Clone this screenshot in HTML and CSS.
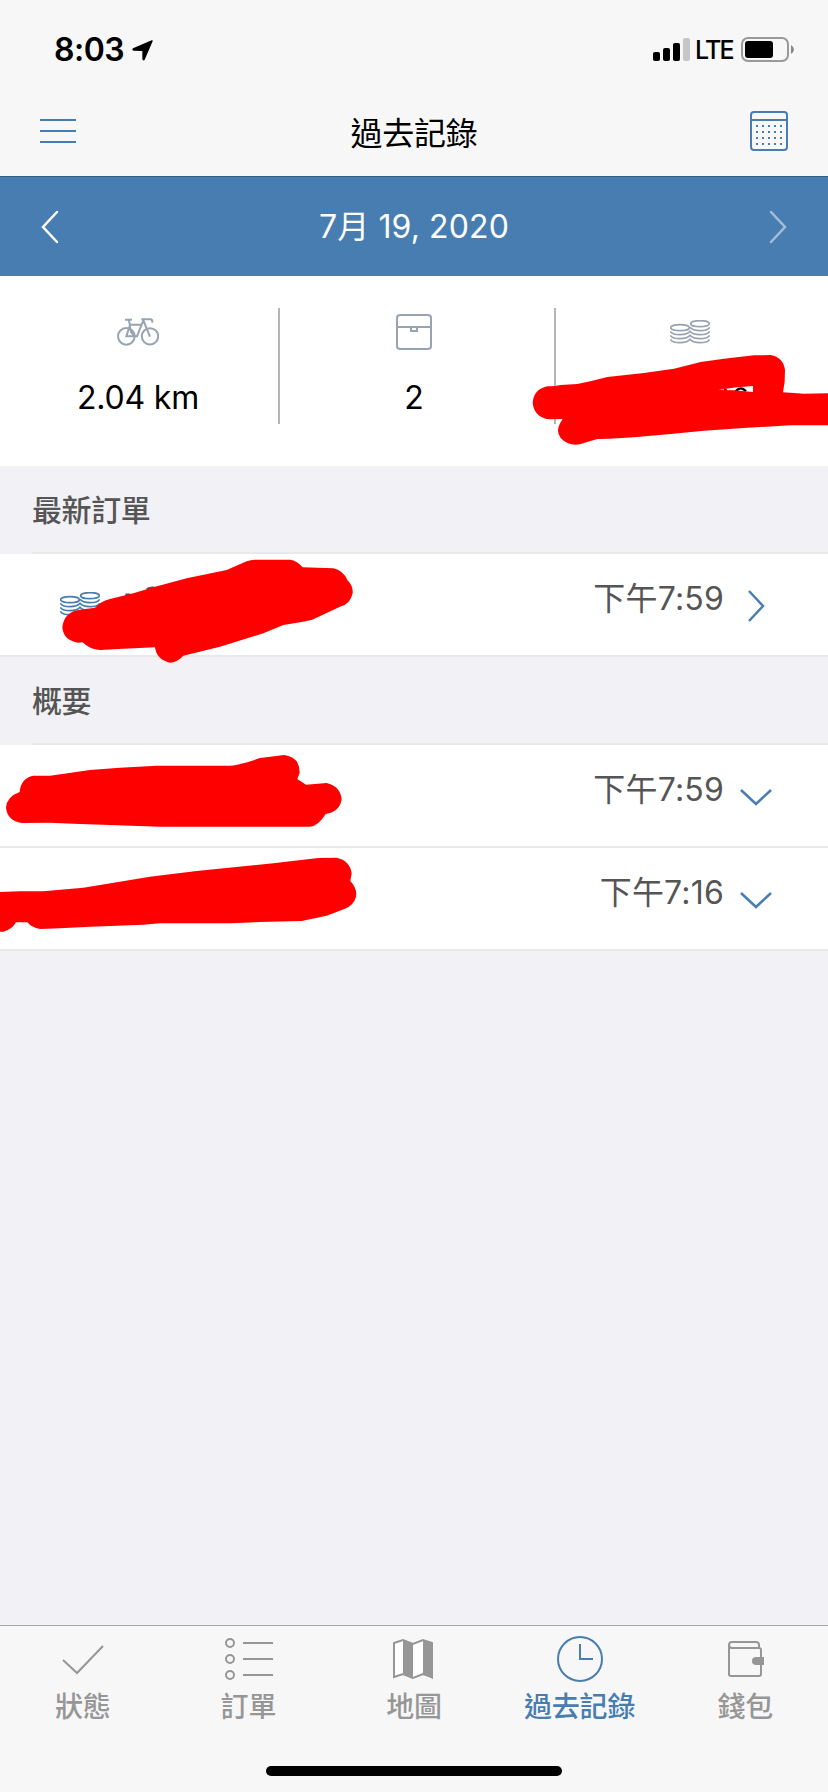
FILE: index.html
```html
<!DOCTYPE html>
<html lang="zh-Hant">
<head>
<meta charset="utf-8">
<title>過去記錄</title>
<link rel="stylesheet" href="styles.css">
</head>
<body>
<div class="screen">
  <header class="status-bar">
    <span class="clock">8:03</span>
    <svg class="location" width="21" height="21" viewBox="0 0 63 63"><path d="M59 1 Q63 0 62 4 L38 59 Q34 64 31 58 L31 33 L5 32 Q-2 30 3 25 Z"/></svg>
    <div class="status-right">
      <svg width="37" height="23" viewBox="0 0 37 23"><rect x="0" y="14" width="7" height="9" rx="2"/><rect x="10" y="10" width="7" height="13" rx="2"/><rect x="20" y="5" width="7" height="18" rx="2"/><rect x="30" y="0" width="7" height="23" rx="2" fill="#c6c6c6"/></svg>
      <span class="network">LTE</span>
      <svg class="battery" width="54" height="25" viewBox="0 0 54 25"><rect x="2" y="1" width="46" height="23" rx="6" fill="none" stroke="#999" stroke-width="2"/><rect x="5" y="4" width="28" height="17" rx="3"/><path d="M51 8 Q54 10 54 12.500 Q54 15 51 17 Z" fill="#888"/></svg>
    </div>
  </header>
  <nav class="nav-bar">
    <svg class="menu" width="36" height="24" viewBox="0 0 36 24"><path d="M0 1H36M0 12H36M0 23H36"/></svg>
    <h1 class="title">過去記錄</h1>
    <svg class="calendar" width="38" height="40" viewBox="0 0 38 40"><rect x="1" y="1" width="36" height="38" rx="3"/><path d="M1 9H37"/><path stroke-dasharray="2 4" d="M6 15H33M6 21H33M6 27H33M6 33H33"/></svg>
  </nav>
  <div class="date-bar">
    <svg width="18" height="34" viewBox="0 0 18 34"><path d="M16 2L2 17L16 32"/></svg>
    <span class="date">7月 19, 2020</span>
    <svg class="disabled" width="18" height="34" viewBox="0 0 18 34"><path d="M2 2L16 17L2 32"/></svg>
  </div>
  <section class="stats">
    <div class="stat">
      <div class="stat-icon"><svg width="42" height="28" viewBox="351 142 126 84"><g stroke-width="6"><circle cx="379" cy="197" r="25"/><circle cx="450" cy="197" r="24.500"/><path d="M375 147H396M386 147L390 163L379 197H411L430 149M390 162H424M389 165L393 184L404 197M424 146H452Q458 147 457 156M430 149L450 198"/></g></svg></div>
      <div class="stat-value">2.04 km</div>
    </div>
    <div class="stat">
      <div class="stat-icon"><svg width="36" height="36" viewBox="0 0 36 36"><g stroke-width="2"><rect x="1" y="1" width="34" height="34" rx="3"/><path d="M1 13H35M15 13V17H21V13"/></g></svg></div>
      <div class="stat-value">2</div>
    </div>
    <div class="stat">
      <div class="stat-icon coins-icon"><svg width="40" height="24" viewBox="0 0 120 72"><use href="#coins"/></svg></div>
    </div>
  </section>
  <h2 class="section-title">最新訂單</h2>
  <div class="row">
    <svg class="row-coins" width="40" height="24" viewBox="0 0 120 72"><use href="#coins"/></svg>
    <span class="time">下午7:59</span>
    <svg class="chevron" width="32" height="32" viewBox="0 0 32 32"><path d="M9 1L23 16L9 31"/></svg>
  </div>
  <h2 class="section-title">概要</h2>
  <div class="row">
    <span class="time">下午7:59</span>
    <svg class="chevron" width="32" height="32" viewBox="0 0 32 32"><path d="M1 9L16 23L31 9"/></svg>
  </div>
  <div class="row">
    <span class="time">下午7:16</span>
    <svg class="chevron" width="32" height="32" viewBox="0 0 32 32"><path d="M1 9L16 23L31 9"/></svg>
  </div>
  <footer class="tab-bar">
    <div class="tab"><svg width="42" height="46" viewBox="0 0 42 46"><path d="M1 24L15 37L41 10"/></svg><span>狀態</span></div>
    <div class="tab"><svg class="list" width="48" height="46" viewBox="0 0 48 46"><circle cx="5" cy="7" r="4"/><circle cx="5" cy="23" r="4"/><circle cx="5" cy="39" r="4"/><path d="M18 7H48M18 23H48M18 39H48"/></svg><span>訂單</span></div>
    <div class="tab"><svg class="map" width="40" height="46" viewBox="0 0 40 46"><path fill="#fff" d="M1 7L10 4L20 8L30 4L39 7V41L30 38L20 42L10 38L1 41Z"/><path fill="#969696" stroke="none" d="M10 4L20 8V43L10 38ZM30 4L40 7V43L30 38Z"/></svg><span>地圖</span></div>
    <div class="tab active"><svg width="46" height="46" viewBox="0 0 46 46"><circle cx="23" cy="23" r="22"/><path d="M23 8V23H36"/></svg><span>過去記錄</span></div>
    <div class="tab"><svg class="wallet" width="36" height="46" viewBox="0 0 36 46"><path d="M1 9V38Q1 40 3 40H31Q33 40 33 38V14Q33 12 31 12H4Q1 12 1 9Q1 6 4 6H28Q31 6 31 9V12"/><path fill="#969696" stroke="none" d="M36 21H28Q24 21 24 25Q24 29 28 29H36Z"/></svg><span>錢包</span></div>
  </footer>
  <div class="home-indicator"></div>

  <svg class="marks" width="828" height="1792" viewBox="0 0 2484 5376">
    <defs>
      <g id="coins" fill="none" stroke-width="5"><ellipse cx="30" cy="23" rx="28" ry="9"/><ellipse cx="90" cy="11" rx="28" ry="9"/><path d="M1 34Q7 44 30 44T60 34Q67 44 90 44T119 34M1 46Q7 56 30 56T60 46Q67 56 90 56T119 46M1 58Q7 68 30 68T60 58Q67 68 90 68T119 58M60 22Q67 32 90 32T119 22"/></g>
    </defs>
    <path class="ink-black" d="M2172 1171L2180 1170M2207 1174Q2222 1156 2238 1174"/>
    <path class="ink-grey" d="M376 1784H390M440 1768Q452 1761 464 1764"/>
    <path transform="translate(1242 810)" fill-rule="evenodd" d="M356 400Q358 358 400 349Q425 349 440 345L490 342Q535 333 580 321L690 309L780 296L860 276L930 266L1020 256L1070 255Q1108 262 1113 300L1112 335L1107 367L1170 371L1242 370V466H1130L1000 473L870 482L770 492L660 502L585 506L550 507L500 522Q480 527 462 520Q420 500 437 462L446 447L405 448Q362 443 356 400ZM914 360L960 361L1017 366V348Q960 351 914 360Z"/>
    <path transform="translate(0 1620)" d="M187 262Q192 215 240 209L285 203Q305 182 330 177L400 160L460 142L560 115L680 90L740 64Q752 59 765 59H870Q892 62 908 82L1000 85Q1030 92 1042 120Q1060 138 1058 160Q1050 195 1020 200L940 238Q930 243 850 255L790 280L660 320L550 347Q530 368 510 368Q470 360 465 322L370 326L300 330Q268 328 248 307L235 308Q190 302 187 262Z"/>
    <path transform="translate(0 2190)" d="M18 233Q20 200 59 186Q62 145 100 137H150L270 120L360 113L470 107H690Q715 107 780 84L853 75Q900 82 899 128L892 147L918 164L980 159Q1020 168 1025 207Q1020 245 977 252Q955 288 930 290H480L220 281L150 278L65 279Q22 272 18 233Z"/>
    <path transform="translate(0 2190)" d="M0 486L60 484L130 484L250 473L450 440L590 423L820 400L955 384L1010 383Q1050 392 1055 430L1051 453Q1072 475 1068 500Q1062 525 1035 536L980 557L905 573L780 576L690 580H480L430 584L270 590L180 595L120 597Q95 593 82 577H48Q35 600 10 605H0Z"/>
  </svg>
</div>
</body>
</html>
```
FILE: styles.css
```css
* { box-sizing: border-box; }
body {
  margin: 0;
  font-family: Inter, "Noto Sans CJK TC", sans-serif;
  color: #000;
}
.screen {
  position: relative;
  display: flex;
  flex-direction: column;
  width: 828px;
  height: 1792px;
  overflow: hidden;
  background: #f2f1f6;
}
.status-bar {
  display: flex;
  align-items: flex-start;
  height: 88px;
  padding: 38px 34px 0 54px;
  background: #f7f7f7;
}
.clock {
  width: 78px;
  line-height: 24px;
  font-size: 32px;
  font-weight: 600;
  letter-spacing: -0.5px;
}
.location { margin-top: 2px; }
.status-right {
  display: flex;
  margin-left: auto;
}
.network {
  flex: none;
  width: 50px;
  padding-left: 5px;
  line-height: 25px;
  font-size: 25px;
  font-weight: 500;
  letter-spacing: -1.8px;
}
.battery { margin-top: -1px; }
.nav-bar {
  display: flex;
  align-items: flex-start;
  justify-content: space-between;
  height: 89px;
  padding: 23px 40px 0;
  border-bottom: 1px solid #365e83;
  background: #f7f7f7;
}
.nav-bar svg {
  fill: none;
  stroke: #477db0;
  stroke-width: 2;
}
.menu { margin-top: 8px; }
.title {
  margin: 1px 0 0 2px;
  line-height: 44px;
  font-size: 32px;
  font-weight: 400;
  letter-spacing: -0.3px;
}
.date-bar {
  display: flex;
  align-items: center;
  justify-content: space-between;
  height: 99px;
  padding: 0 41px;
  background: #477db0;
  color: #fff;
}
.date-bar svg {
  fill: none;
  stroke: #fff;
  stroke-width: 2.5;
  stroke-linecap: round;
}
.date-bar .disabled { opacity: 0.5; }
.date {
  padding-bottom: 5px;
  font-size: 32px;
  letter-spacing: 0.1px;
}
.stats {
  display: grid;
  grid-template-columns: repeat(3, 1fr);
  height: 190px;
  padding-top: 32px;
  background: #fff;
}
.stat {
  position: relative;
  text-align: center;
}
.stat + .stat::before {
  content: "";
  position: absolute;
  top: 0;
  left: 2px;
  width: 2px;
  height: 116px;
  background: #b5b5b5;
}
.stat-icon {
  display: flex;
  align-items: center;
  justify-content: center;
  height: 48px;
}
.stat-icon svg {
  fill: none;
  stroke: #98a3b2;
}
.stat-value {
  margin-top: 20px;
  line-height: 44px;
  font-size: 32px;
  letter-spacing: -0.2px;
}
.section-title {
  height: 88px;
  margin: 0 0 0 32px;
  border-bottom: 2px solid #e9e9e9;
  line-height: 88px;
  font-size: 30px;
  font-weight: 500;
  color: #555;
  letter-spacing: -0.4px;
}
.row {
  display: flex;
  align-items: flex-start;
  height: 103px;
  padding: 22px 56px 0 60px;
  border-bottom: 2px solid #e9e9e9;
  background: #fff;
}
.row-coins {
  margin-top: 16px;
  stroke: #477db0;
}
.time {
  margin: 1px 0 0 auto;
  line-height: 44px;
  font-size: 32px;
  color: #555;
  letter-spacing: 0.2px;
}
.chevron {
  margin: 14px 0 0 16px;
  fill: none;
  stroke: #477db0;
  stroke-width: 2.5;
}
.tab-bar {
  display: grid;
  grid-template-columns: repeat(5, 1fr);
  height: 167px;
  margin-top: auto;
  padding-top: 10px;
  border-top: 1px solid #a5a5aa;
  background: #f7f7f7;
}
.tab {
  display: flex;
  flex-direction: column;
  align-items: center;
  line-height: 42px;
  font-size: 28px;
  font-weight: 500;
  letter-spacing: -0.2px;
  color: #969696;
}
.tab svg {
  margin-bottom: 4px;
  fill: none;
  stroke: currentColor;
  stroke-width: 2;
}
.tab .list, .tab .wallet { margin-left: 2px; }
.tab .map { margin-right: 2px; }
.tab.active { color: #477db0; }
.home-indicator {
  position: absolute;
  bottom: 16px;
  left: 266px;
  width: 296px;
  height: 10px;
  border-radius: 5px;
  background: #000;
}
.marks {
  position: absolute;
  top: 0;
  left: 0;
  fill: #f00;
}
.ink-black, .ink-grey {
  fill: none;
  stroke: #000;
  stroke-width: 7;
}
.ink-grey { stroke: #555; }
```
